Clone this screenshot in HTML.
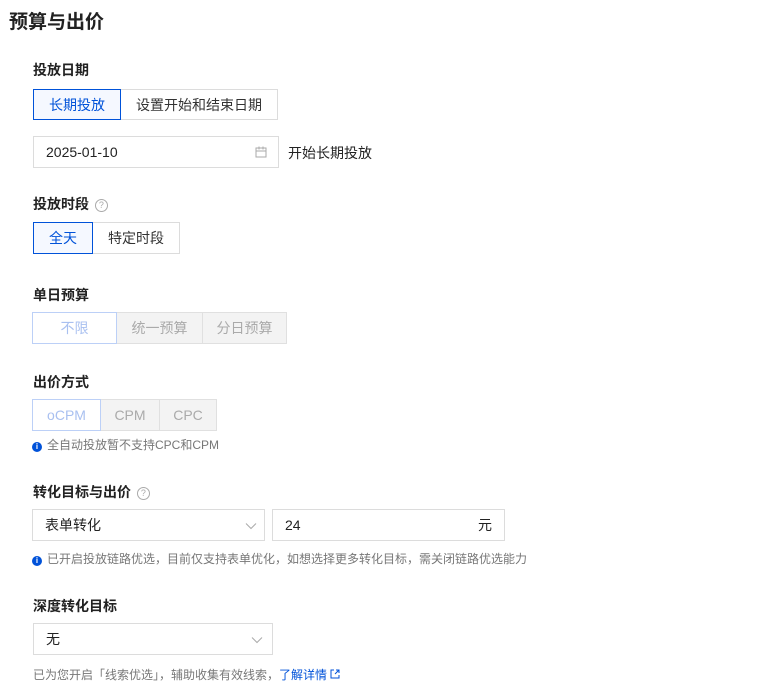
<!DOCTYPE html>
<html><head><meta charset="utf-8"><style>
body{margin:0;width:770px;height:690px;background:#fff;font-family:"Liberation Sans","Noto Sans CJK SC",sans-serif;color:#222;position:relative;overflow:hidden}
.a{position:absolute;white-space:nowrap}
.t{font-size:19px;font-weight:bold;color:#222}
.l{font-size:14px;font-weight:bold;color:#222}
.b{position:absolute;box-sizing:border-box;border:1px solid #dcdcdc;font-size:14px;display:flex;align-items:center;justify-content:center;color:#333;background:#fff}
.on{border-color:#0052d9;color:#0052d9;background:#f5f8ff;z-index:2}
.dis{background:#f3f3f3;color:#aaa;border-color:#e0e0e0}
.dison{border-color:#bcd0f7;color:#a9c0f0;background:#fff;z-index:2}
.in{position:absolute;box-sizing:border-box;border:1px solid #dcdcdc;font-size:14px;color:#222;display:flex;align-items:center;padding:0 12px}
.g{font-size:12px;color:#777}
.i{display:inline-block;width:10px;height:10px;border-radius:50%;background:#0052d9;color:#fff;font-size:8px;font-weight:bold;text-align:center;line-height:10px;vertical-align:0px;margin-right:5px}
.q{display:inline-block;width:11px;height:11px;border:1px solid #aaa;border-radius:50%;color:#aaa;font-size:9px;text-align:center;line-height:11px;font-weight:normal;vertical-align:1px;margin-left:2px}
</style></head><body>
<div class="a t" style="left:9px;top:7px">预算与出价</div>

<div class="a l" style="left:33px;top:60px">投放日期</div>
<div class="b on" style="left:33px;top:89px;width:88px;height:31px">长期投放</div>
<div class="b" style="left:120px;top:89px;width:158px;height:31px">设置开始和结束日期</div>
<div class="in" style="left:33px;top:136px;width:246px;height:32px">2025-01-10
<svg style="position:absolute;left:221px;top:9px" width="12" height="12" viewBox="0 0 12 12" fill="none" stroke="#aaa"><rect x="1" y="2" width="10" height="9"/><path d="M1 5h10M4 0.5v3M8 0.5v3"/></svg></div>
<div class="a" style="left:288px;top:143px;font-size:14px">开始长期投放</div>

<div class="a l" style="left:33px;top:194px">投放时段 <span class="q">?</span></div>
<div class="b on" style="left:33px;top:222px;width:60px;height:32px">全天</div>
<div class="b" style="left:92px;top:222px;width:88px;height:32px">特定时段</div>

<div class="a l" style="left:33px;top:285px">单日预算</div>
<div class="b dison" style="left:32px;top:312px;width:85px;height:32px">不限</div>
<div class="b dis" style="left:116px;top:312px;width:87px;height:32px">统一预算</div>
<div class="b dis" style="left:202px;top:312px;width:85px;height:32px">分日预算</div>

<div class="a l" style="left:33px;top:372px">出价方式</div>
<div class="b dison" style="left:32px;top:399px;width:69px;height:32px">oCPM</div>
<div class="b dis" style="left:100px;top:399px;width:60px;height:32px">CPM</div>
<div class="b dis" style="left:159px;top:399px;width:58px;height:32px">CPC</div>
<div class="a g" style="left:32px;top:436px"><span class="i">i</span>全自动投放暂不支持CPC和CPM</div>

<div class="a l" style="left:33px;top:482px">转化目标与出价 <span class="q">?</span></div>
<div class="in" style="left:32px;top:509px;width:233px;height:32px">表单转化
<svg style="position:absolute;left:212px;top:12px" width="12" height="8" viewBox="0 0 12 8" fill="none" stroke="#aaa"><path d="M1 1.5l5 5 5-5"/></svg></div>
<div class="in" style="left:272px;top:509px;width:233px;height:32px">24<span style="position:absolute;right:12px">元</span></div>
<div class="a g" style="left:32px;top:550px"><span class="i">i</span>已开启投放链路优选，目前仅支持表单优化，如想选择更多转化目标，需关闭链路优选能力</div>

<div class="a l" style="left:33px;top:596px">深度转化目标</div>
<div class="in" style="left:33px;top:623px;width:240px;height:32px">无
<svg style="position:absolute;left:217px;top:12px" width="12" height="8" viewBox="0 0 12 8" fill="none" stroke="#aaa"><path d="M1 1.5l5 5 5-5"/></svg></div>
<div class="a g" style="left:33px;top:666px">已为您开启「线索优选」，辅助收集有效线索，<span style="color:#0052d9">了解详情 <svg width="10" height="10" viewBox="0 0 10 10" fill="none" stroke="#0052d9"><path d="M4 1H1v8h8V6M6 1h3v3M9 1L5 5"/></svg></span></div>
</body></html>
